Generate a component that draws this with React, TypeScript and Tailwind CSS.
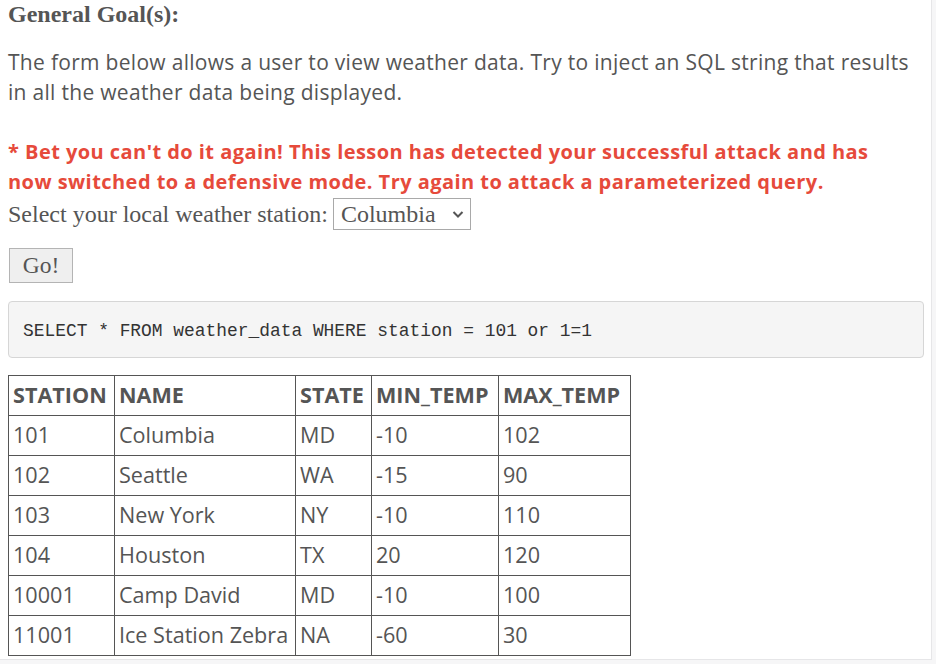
import React from 'react';

const rows: [string, string, string, string, string][] = [
    ['101', 'Columbia', 'MD', '-10', '102'],
    ['102', 'Seattle', 'WA', '-15', '90'],
    ['103', 'New York', 'NY', '-10', '110'],
    ['104', 'Houston', 'TX', '20', '120'],
    ['10001', 'Camp David', 'MD', '-10', '100'],
    ['11001', 'Ice Station Zebra', 'NA', '-60', '30'],
];

const headers = ['STATION', 'NAME', 'STATE', 'MIN_TEMP', 'MAX_TEMP'];
const colWidths = ['w-[106px]', 'w-[181px]', 'w-[76px]', 'w-[127px]', 'w-[132px]'];

export default function App() {
    return (
        <div className="h-[664px] w-[936px] overflow-hidden bg-[#f6f6f7]">
            <div className="h-[660px] w-[932px] border-b border-r border-[#e6e6e8] bg-white px-2 text-[#555] [font-family:'Open_Sans',sans-serif]">
                <h4 className="pt-0 text-[24px] font-bold leading-[28px] [font-family:'Liberation_Serif',serif]">
                    General Goal(s):
                </h4>
                <p className="mt-[19px] text-[21px] leading-[30px] tracking-[0.3px]">
                    The form below allows a user to view weather data. Try to
                    inject an SQL string that results in all the weather data
                    being displayed.
                </p>
                <p className="mt-[30px] max-w-[890px] text-[20px] font-bold leading-[30px] tracking-[0.45px] text-[#e64a3b]">
                    * Bet you can't do it again! This lesson has detected your
                    successful attack and has now switched to a defensive mode.
                    Try again to attack a parameterized query.
                </p>
                <div className="mt-px flex items-center text-[24px] leading-[32px] [font-family:'Liberation_Serif',serif]">
                    <span>Select your local weather station:</span>
                    <div className="ml-[5px] flex h-[32px] w-[138px] items-center justify-between border border-[#a9a9a9] pl-[7px] pr-[5px]">
                        <span>Columbia</span>
                        <svg width="14" height="14" viewBox="0 0 14 14">
                            <path d="M2.5 5l4.5 4.5L11.5 5" fill="none" stroke="#555" strokeWidth="2" />
                        </svg>
                    </div>
                </div>
                <button className="ml-px mt-[18px] h-[35px] w-[64px] border border-[#b4b4b4] bg-[#efefef] text-[23.5px] leading-none text-[#555] [font-family:'Liberation_Serif',serif]">
                    Go!
                </button>
                <pre className="mt-[18px] flex h-[57px] w-[916px] items-center rounded border border-[#d6d6d6] bg-[#f5f5f5] px-[14px] pt-[3px] text-[17.9px] text-[#333] [font-family:'Liberation_Mono',monospace]">
                    SELECT * FROM weather_data WHERE station = 101 or 1=1
                </pre>
                <table className="mt-[17px] w-[622px] table-fixed border-collapse whitespace-nowrap text-[21.6px]">
                    <thead>
                        <tr>
                            {headers.map((h, i) => (
                                <th
                                    key={h}
                                    className={`${colWidths[i]} h-[40px] border border-[#555] px-[4px] text-left font-bold`}
                                >
                                    {h}
                                </th>
                            ))}
                        </tr>
                    </thead>
                    <tbody>
                        {rows.map((r) => (
                            <tr key={r[0]}>
                                {r.map((c, i) => (
                                    <td
                                        key={i}
                                        className="h-[40px] border border-[#555] px-[4px]"
                                    >
                                        {c}
                                    </td>
                                ))}
                            </tr>
                        ))}
                    </tbody>
                </table>
            </div>
        </div>
    );
}
